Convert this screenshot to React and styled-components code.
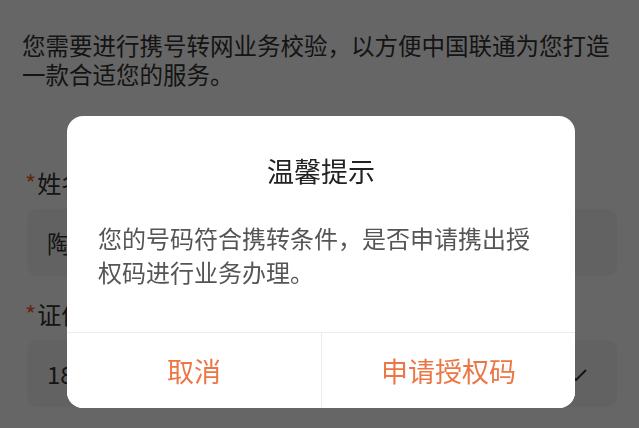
import React from 'react';
import styled, { createGlobalStyle } from 'styled-components';

const GlobalStyle = createGlobalStyle`
  html, body {
    margin: 0;
    padding: 0;
    background: #ffffff;
    font-family: "Noto Sans CJK SC", "Noto Sans", sans-serif;
  }
`;

const Page = styled.div`
  width: 639px;
  height: 428px;
  overflow: hidden;
  padding: 31px 22px 0;
  box-sizing: border-box;
  color: #333333;
`;

const Intro = styled.p`
  margin: 0;
  font-size: 23.5px;
  line-height: 29px;
  color: #333333;
`;

const Form = styled.div`
  margin-top: 77px;
  padding: 0 0 0 3px;
  display: flex;
  flex-direction: column;
`;

const Label = styled.div`
  font-size: 24px;
  line-height: 34px;
  color: #333333;
  margin-top: ${p => (p.$first ? '0' : '21px')};

  &::before {
    content: '*';
    color: #f0642d;
    margin-right: 1px;
  }
`;

const Field = styled.div`
  position: relative;
  margin: 9px 0 0 2px;
  height: 67px;
  border-radius: 10px;
  background: #f5f5f5;
  display: flex;
  align-items: center;
  padding: 0 20px;
  font-size: 24px;
  color: #333333;
`;

const Chevron = styled.svg`
  position: absolute;
  right: 30px;
  top: 50%;
  margin-top: -5px;
`;

const Overlay = styled.div`
  position: fixed;
  inset: 0;
  background: rgba(0, 0, 0, 0.6);
  display: flex;
  justify-content: center;
  align-items: flex-start;
  padding: 116px 0 0 3px;
`;

const Dialog = styled.div`
  width: 508px;
  background: #ffffff;
  border-radius: 16px;
  overflow: hidden;
  display: flex;
  flex-direction: column;
`;

const Title = styled.h3`
  margin: 0;
  padding-top: 36px;
  font-size: 27px;
  line-height: 38px;
  font-weight: 400;
  text-align: center;
  color: #222222;
`;

const Message = styled.p`
  margin: 0;
  padding: 31px 31px 43px;
  font-size: 24px;
  line-height: 34px;
  color: #555555;
`;

const Actions = styled.div`
  display: grid;
  grid-template-columns: 1fr 1fr;
  border-top: 1px solid #ececec;
`;

const ActionButton = styled.button`
  height: 75px;
  border: none;
  background: #ffffff;
  font-family: inherit;
  font-size: 27px;
  color: #ec7745;
  padding: 0;
  border-left: ${p => (p.$divided ? '1px solid #ececec' : 'none')};
`;

export default function App() {
  return (
    <>
      <GlobalStyle />
      <Page>
        <Intro>您需要进行携号转网业务校验，以方便中国联通为您打造一款合适您的服务。</Intro>
        <Form>
          <Label $first>姓名</Label>
          <Field>陶*</Field>
          <Label>证件号码</Label>
          <Field>
            18****
            <Chevron width="22" height="12" viewBox="0 0 22 12">
              <path d="M1 1 L11 11 L21 1" fill="none" stroke="#333" strokeWidth="2" />
            </Chevron>
          </Field>
        </Form>
      </Page>
      <Overlay>
        <Dialog>
          <Title>温馨提示</Title>
          <Message>您的号码符合携转条件，是否申请携出授权码进行业务办理。</Message>
          <Actions>
            <ActionButton>取消</ActionButton>
            <ActionButton $divided>申请授权码</ActionButton>
          </Actions>
        </Dialog>
      </Overlay>
    </>
  );
}
